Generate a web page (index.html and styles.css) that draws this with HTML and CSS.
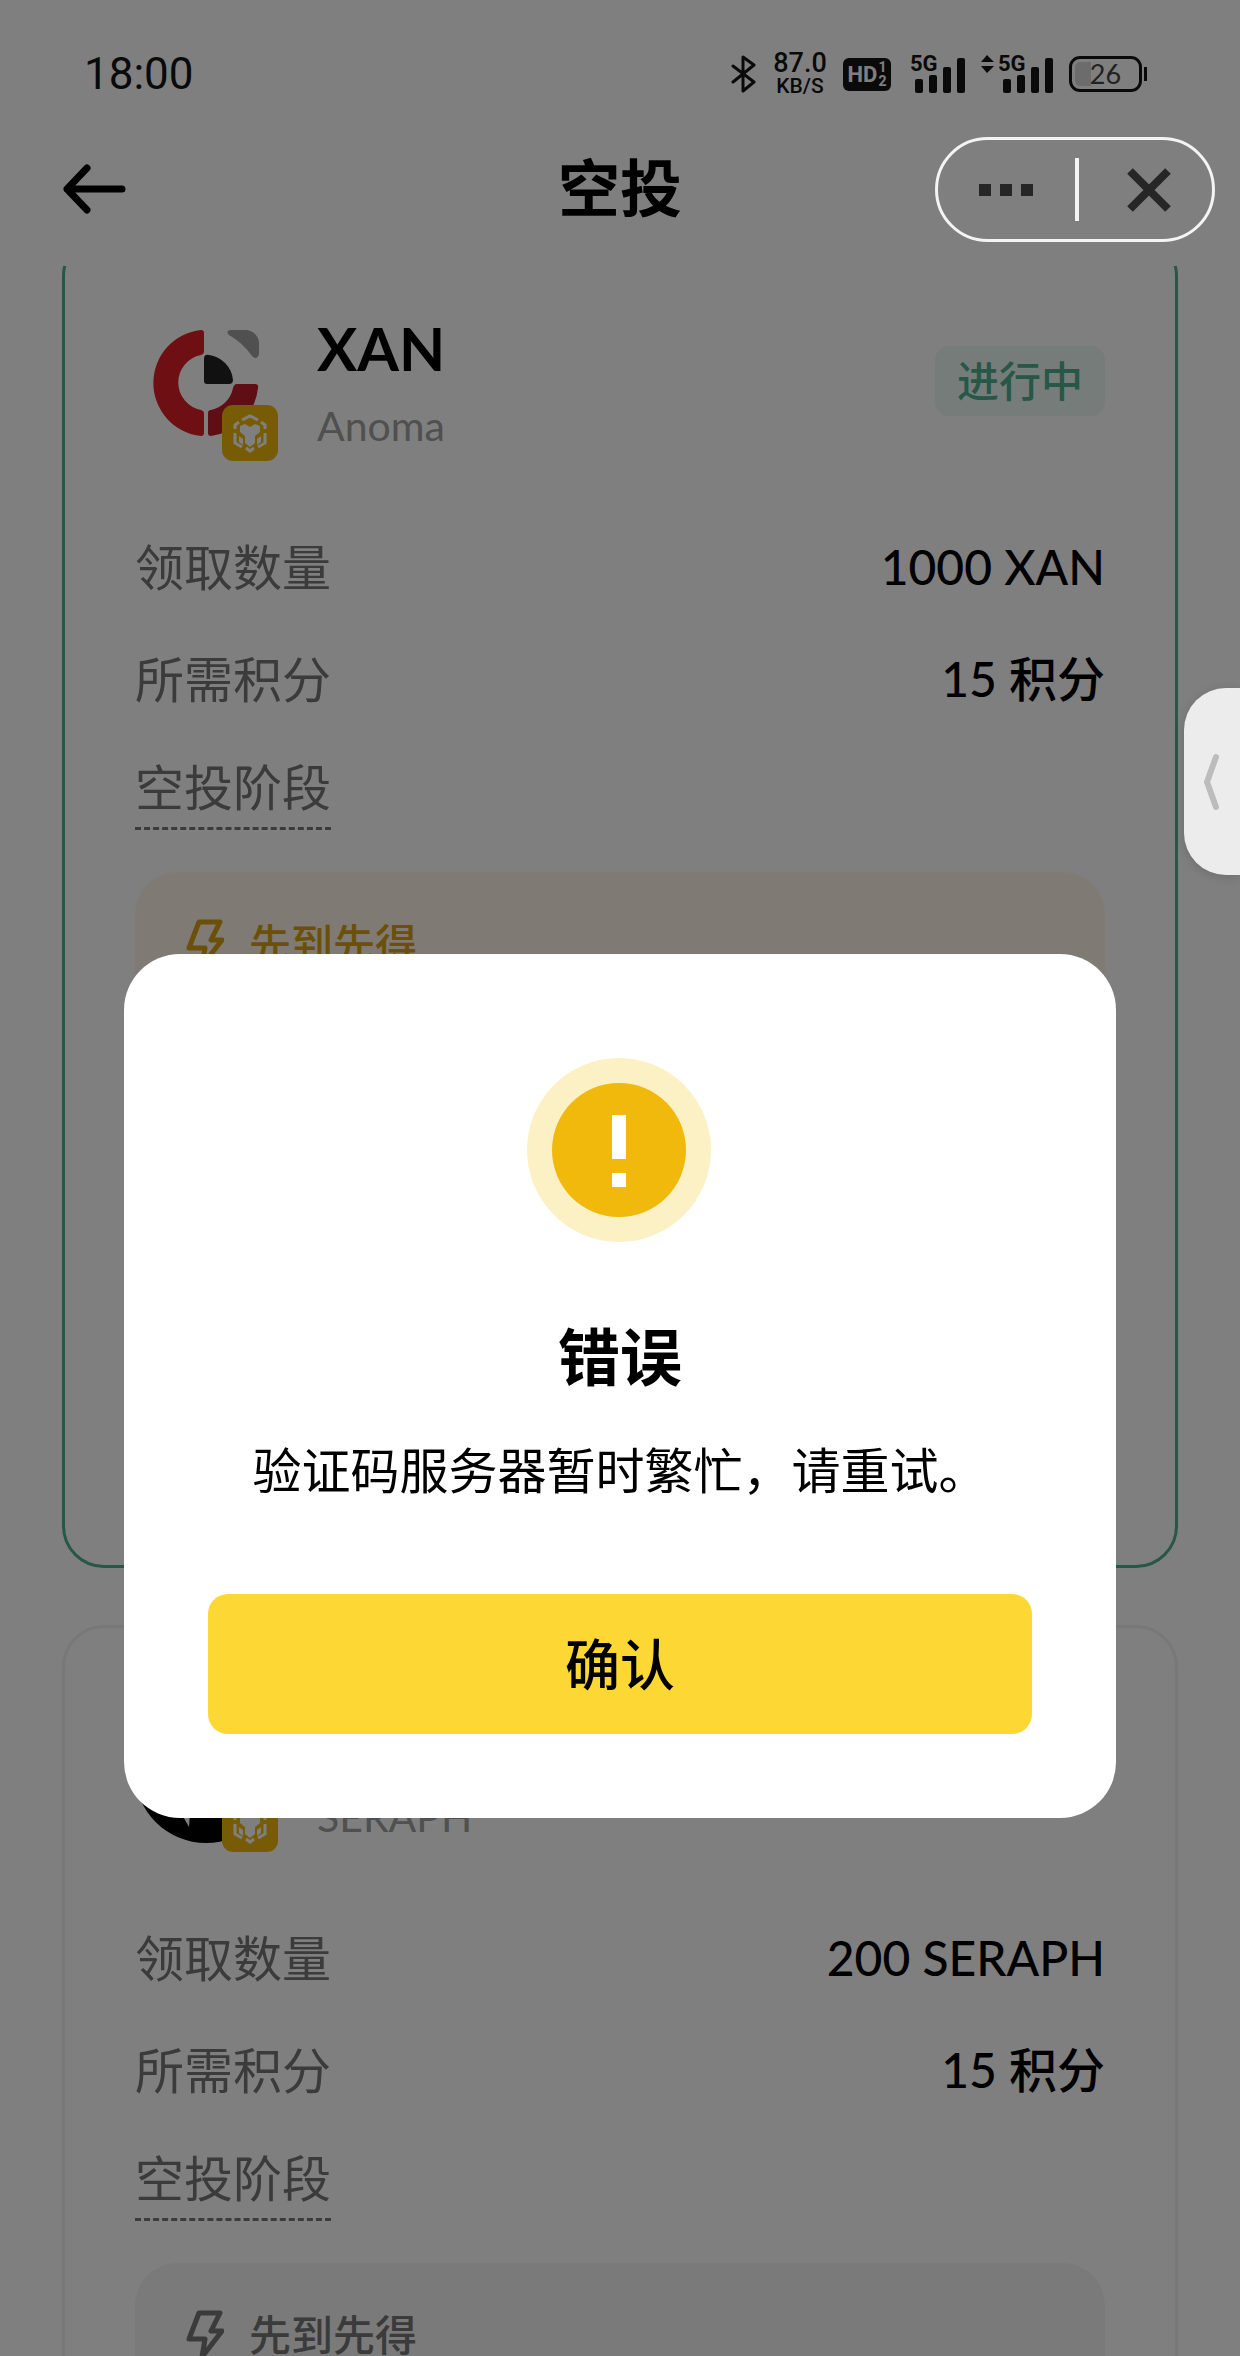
FILE: index.html
```html
<!DOCTYPE html>
<html lang="zh-CN">
<head>
<meta charset="utf-8">
<meta name="viewport" content="width=device-width, initial-scale=1">
<title>空投</title>
<link rel="stylesheet" href="styles.css">
</head>
<body>
<svg class="sprite" aria-hidden="true">
  <symbol id="bnb" viewBox="0 0 56 56">
    <rect width="56" height="56" rx="11" fill="#f0b90b"/>
    <g fill="none" stroke="#fff" stroke-width="3">
      <path d="M20 15l8-4 8 4M13 24v-4l4-3M43 24v-4l-4-3M13 28v10l7 4M43 28v10l-7 4M24 43l4 3 4-3"/>
    </g>
    <path d="M18 21l5-2 5 3 5-3 5 2v6l-5 4v7l-5 4-5-4v-7l-5-4z" fill="#fff"/>
    <path d="M17 31v6l4 3v-6zM39 31v6l-4 3v-6z" fill="#fff"/>
  </symbol>
  <symbol id="bolt" viewBox="0 0 38 50">
    <path d="M13 3h21l-9 18h11L16 47l3-18H3z" fill="none" stroke="currentColor" stroke-width="5" stroke-linejoin="round"/>
  </symbol>
  <symbol id="bars" viewBox="0 0 55 38">
    <path d="M5 26q0-2 2-2h4q2 0 2 2v10q0 2-2 2H7q-2 0-2-2zM19 22q0-2 2-2h4q2 0 2 2v14q0 2-2 2h-4q-2 0-2-2zM33 14q0-2 2-2h4q2 0 2 2v22q0 2-2 2h-4q-2 0-2-2zM47 5q0-2 2-2h4q2 0 2 2v31q0 2-2 2h-4q-2 0-2-2z" fill="#141414"/>
  </symbol>
</svg>

<div class="app">
  <div class="status">
    <span class="clock">18:00</span>
    <div class="indicators">
      <svg width="26" height="40" viewBox="0 0 26 40" fill="none" stroke="#141414" stroke-width="3" stroke-linejoin="round" stroke-linecap="round"><path d="M2 12l21 16-11 9V3l11 8L2 28"/></svg>
      <div class="speed"><span>87.0</span><span class="unit">KB/S</span></div>
      <div class="hd"><span>HD</span><span class="sims"><span>1</span><span>2</span></span></div>
      <div class="signal">
        <span class="net">5G</span>
        <svg width="55" height="38"><use href="#bars"/></svg>
      </div>
      <div class="signal data">
        <svg class="updown" width="13" height="18" viewBox="0 0 13 18" fill="#141414"><path d="M0 7l6-7 7 7zM0 11h13l-7 7z"/></svg>
        <span class="net">5G</span>
        <svg width="55" height="38"><use href="#bars"/></svg>
      </div>
      <div class="battery"><span class="level">26</span></div>
    </div>
  </div>

  <header class="topbar">
    <button class="back" aria-label="返回">
      <svg width="66" height="52" viewBox="0 0 66 52" fill="none" stroke="#000" stroke-width="7" stroke-linecap="round" stroke-linejoin="round"><path d="M25 5L5 26l20 21M5 26h55"/></svg>
    </button>
    <h1>空投</h1>
  </header>

  <main class="content">
    <div class="list">
      <article class="card active">
        <div class="token">
          <div class="logo">
            <svg width="142" height="142" viewBox="0 0 142 142">
              <path d="M66 20q3 0 3 3v19q0 2-3 3a28 28 0 0 0 0 55q3 1 3 3v20q0 3-3 3a53.3 53.3 0 0 1 0-106z" fill="#dc1e28"/>
              <path d="M73 103q0-3 3-3a28 28 0 0 0 22-22q1-4 4-4h18q4 0 3 4a54 54 0 0 1-47 48q-3 0-3-3z" fill="#c01c2a"/>
              <path d="M69 49q0-5 5-4a28 28 0 0 1 24 25q0 4-4 4H72q-3 0-3-3z" fill="#222"/>
              <path d="M96 20h16q10 2 12 12v12q-2 7-7 2A70 70 0 0 0 94 25q-4-4 2-5z" fill="#a0a0a0"/>
            </svg>
            <svg class="chain" width="56" height="56"><use href="#bnb"/></svg>
          </div>
          <div class="names"><h2>XAN</h2><p>Anoma</p></div>
          <span class="state">进行中</span>
        </div>
        <dl class="facts">
          <div><dt>领取数量</dt><dd>1000 XAN</dd></div>
          <div><dt>所需积分</dt><dd>15 积分</dd></div>
        </dl>
        <a class="stage" href="#stage">空投阶段</a>
        <section class="phase"><svg width="38" height="50"><use href="#bolt"/></svg><span>先到先得</span></section>
      </article>

      <article class="card">
        <div class="token">
          <div class="logo">
            <svg width="142" height="142" viewBox="0 0 142 142"><circle cx="71" cy="71" r="71" fill="#000"/><path d="M46 112l8 14 1-14z" fill="#fff"/></svg>
            <svg class="chain" width="56" height="56"><use href="#bnb"/></svg>
          </div>
          <div class="names"><h2>SERAPH</h2><p>SERAPH</p></div>
        </div>
        <dl class="facts">
          <div><dt>领取数量</dt><dd>200 SERAPH</dd></div>
          <div><dt>所需积分</dt><dd>15 积分</dd></div>
        </dl>
        <a class="stage" href="#stage">空投阶段</a>
        <section class="phase"><svg width="38" height="50"><use href="#bolt"/></svg><span>先到先得</span></section>
      </article>
    </div>
  </main>
</div>

<div class="overlay">
  <div class="dialog" role="alertdialog" aria-labelledby="dialog-title" aria-describedby="dialog-text">
    <svg class="warning" width="186" height="186" viewBox="0 0 186 186"><circle cx="92" cy="92" r="92" fill="#fcf1c5"/><circle cx="92" cy="92" r="67" fill="#f0b90b"/><path d="M85 57h14v44H85zM85 115h14v14H85z" fill="#fff"/></svg>
    <h2 id="dialog-title">错误</h2>
    <p id="dialog-text">验证码服务器暂时繁忙，请重试。</p>
    <button class="confirm">确认</button>
  </div>
</div>

<div class="capsule">
  <button class="more" aria-label="更多"><svg width="54" height="12" viewBox="0 0 54 12" fill="#262626"><path d="M0 0h12v12H0zM21 0h12v12H21zM42 0h12v12H42z"/></svg></button>
  <span class="divider"></span>
  <button class="close" aria-label="关闭"><svg width="44" height="44" viewBox="0 0 44 44" stroke="#262626" stroke-width="8"><path d="M3 3l38 38M41 3L3 41"/></svg></button>
</div>

<button class="side-tab" aria-label="展开侧栏">
  <svg width="18" height="58" viewBox="0 0 18 58" fill="none" stroke="#bcbcbc" stroke-width="6" stroke-linecap="round" stroke-linejoin="round"><path d="M14 4L5 29l9 25"/></svg>
</button>
</body>
</html>
```

FILE: styles.css
```css
* { box-sizing: border-box; margin: 0; padding: 0; }

body {
  font-family: Lato, "Noto Sans CJK SC", sans-serif;
  color: #000;
  background: #fff;
}

button { font: inherit; color: inherit; background: none; border: 0; cursor: pointer; }
svg { display: block; flex: none; }
.sprite { display: none; }

.app { display: flex; flex-direction: column; height: 100vh; overflow: hidden; }

/* Status bar */
.status {
  display: flex;
  flex: none;
  align-items: center;
  justify-content: space-between;
  height: 112px;
  padding: 36px 98px 0 84px;
  font-family: Roboto, sans-serif;
  color: #141414;
}
.clock { font-size: 44px; line-height: 52px; }
.indicators { display: flex; align-items: center; gap: 16px; }
.speed { display: flex; flex-direction: column; align-items: center; width: 54px; font-size: 27px; font-weight: 500; line-height: 24px; }
.speed .unit { font-size: 21px; line-height: 22px; }
.hd {
  display: flex;
  align-items: center;
  justify-content: center;
  gap: 1px;
  width: 48px;
  height: 33px;
  margin-right: 3px;
  border-radius: 6px;
  background: #141414;
  color: #fff;
  font-size: 22px;
  font-weight: 700;
}
.sims { display: flex; flex-direction: column; font-size: 14px; line-height: 14px; }
.signal { position: relative; display: flex; align-items: flex-end; }
.net { position: absolute; left: 0; top: -1px; font-size: 22px; font-weight: 700; line-height: 20px; }
.data { padding-left: 17px; }
.data .net { left: 17px; }
.updown { position: absolute; left: 0; top: 0; }
.battery {
  position: relative;
  width: 73px;
  height: 36px;
  padding: 3px;
  border: 3px solid #141414;
  border-radius: 11px;
}
.battery::after {
  content: "";
  position: absolute;
  right: -8px;
  top: 8px;
  width: 3px;
  height: 14px;
  background: #141414;
}
.level {
  display: block;
  border-radius: 5px;
  background: linear-gradient(90deg, #d8d8d8 26%, transparent 26%);
  color: #444;
  font-family: Lato, sans-serif;
  font-size: 27px;
  line-height: 24px;
  text-align: center;
}

/* Title bar */
.topbar {
  display: grid;
  grid-template-columns: 1fr auto 1fr;
  flex: none;
  align-items: start;
  height: 154px;
  padding: 0 62px;
}
.back { justify-self: start; padding: 51px 0; }
.topbar h1 { padding-top: 32px; font-size: 62px; line-height: 88px; }

/* Airdrop cards */
.content { flex: 1; min-height: 0; overflow: hidden; }
.list { display: flex; flex-direction: column; gap: 57px; margin-top: -32px; padding: 0 62px; }
.card { padding: 73px 70px 70px; border: 3px solid #f0f0f0; border-radius: 42px; }
.card.active { border-color: #4eae8c; }
.token { display: flex; align-items: center; height: 142px; margin-bottom: 85px; }
.logo { position: relative; margin-right: 40px; }
.chain { position: absolute; right: -1px; bottom: -9px; }
.names { flex: 1; padding-top: 14px; }
.names h2 { font-size: 60px; line-height: 76px; }
.names p { color: #a0a0a0; font-size: 41px; line-height: 80px; }
.state {
  padding: 5px 22px;
  border-radius: 14px;
  background: #edf8f4;
  color: #4eae8c;
  font-size: 42px;
  font-weight: 500;
  line-height: 60px;
}
.facts { display: flex; flex-direction: column; gap: 52px; margin-bottom: 48px; }
.facts div { display: flex; justify-content: space-between; font-size: 49px; line-height: 60px; }
.facts dt { color: #767676; }
.facts dd { font-size: 48px; font-weight: 500; }
.stage {
  display: inline-block;
  padding-bottom: 10px;
  border-bottom: 3px dashed #767676;
  color: #767676;
  font-size: 49px;
  line-height: 60px;
  text-decoration: none;
}
.phase {
  display: flex;
  gap: 25px;
  min-height: 623px;
  margin-top: 42px;
  padding: 42px 51px;
  border-radius: 42px;
  background: #f4f4f4;
  color: #767676;
  font-size: 42px;
  font-weight: 500;
  line-height: 60px;
}
.phase svg { margin-top: 5px; }
.active .phase { background: #fef5e8; color: #d4a010; }

/* Error dialog */
.overlay {
  position: fixed;
  inset: 0;
  display: flex;
  align-items: center;
  padding: 416px 124px 0;
  background: rgba(0, 0, 0, 0.5);
}
.dialog {
  display: flex;
  flex: 1;
  flex-direction: column;
  align-items: center;
  padding: 104px 84px 84px;
  border-radius: 56px;
  background: #fff;
  text-align: center;
}
.dialog h2 { margin-top: 73px; font-size: 62px; line-height: 80px; }
.dialog p { margin-top: 43px; font-size: 49px; line-height: 60px; }
.confirm {
  align-self: stretch;
  margin-top: 94px;
  border-radius: 20px;
  background: #fdd835;
  font-size: 55px;
  font-weight: 500;
  line-height: 140px;
}

/* Floating host controls */
.capsule {
  position: fixed;
  top: 137px;
  right: 25px;
  display: flex;
  align-items: center;
  width: 280px;
  height: 105px;
  border: 3px solid #f4f4f4;
  border-radius: 53px;
}
.capsule button { display: flex; align-items: center; justify-content: center; height: 100%; }
.more { width: 137px; padding-right: 2px; }
.close { flex: 1; padding-left: 6px; }
.divider { width: 4px; height: 63px; background: #f4f4f4; }
.side-tab {
  position: fixed;
  top: 688px;
  right: 0;
  display: flex;
  align-items: center;
  width: 56px;
  height: 187px;
  padding-left: 18px;
  border-radius: 42px 0 0 42px;
  background: #ececec;
  box-shadow: 0 2px 12px rgba(0, 0, 0, 0.15);
}
```
